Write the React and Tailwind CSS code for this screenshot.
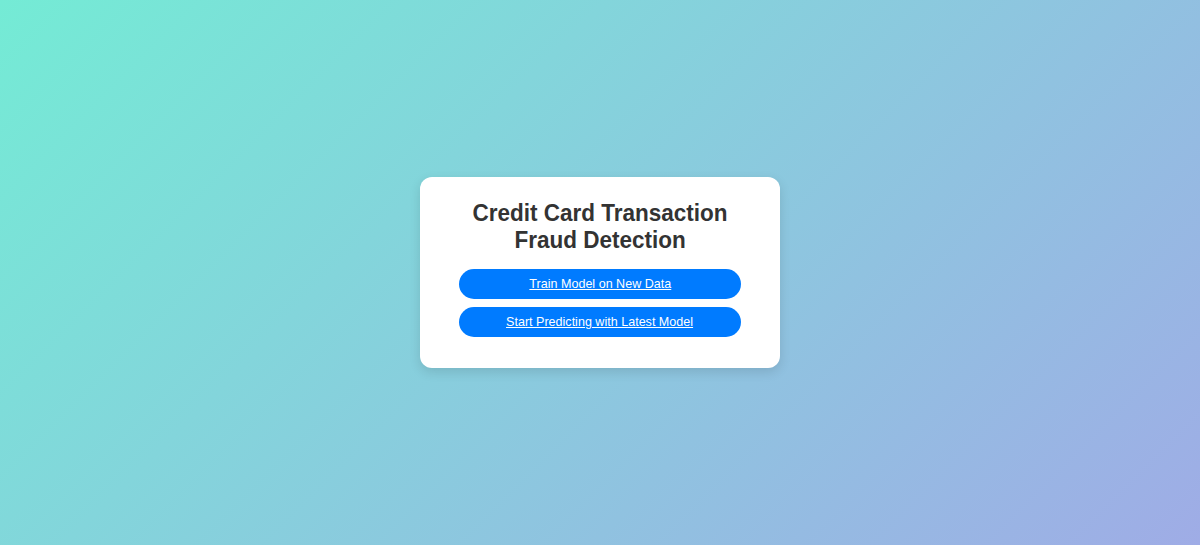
export default function App() {
  return (
    <div className="min-h-screen w-full flex items-center justify-center bg-[linear-gradient(135deg,#74ebd5,#9face6)] font-['Liberation_Sans',Arial,sans-serif]">
      <div className="w-[360px] bg-white rounded-[12px] shadow-[0_4px_12px_rgba(0,0,0,0.12)] pt-[22px] pb-[31px] flex flex-col items-center">
        <h1 className="text-[24px] leading-[27px] font-bold text-[#333] text-center whitespace-nowrap scale-x-[0.9375]">
          Credit Card Transaction
          <br />
          Fraud Detection
        </h1>
        <div className="mt-[16px] flex flex-col gap-2">
          <a href="#" className="w-[282px] h-[30px] rounded-full bg-[#007bff] text-white text-[13.5px] underline flex items-center justify-center">
            <span className="inline-block whitespace-nowrap scale-x-[0.93]">Train Model on New Data</span>
          </a>
          <a href="#" className="w-[282px] h-[30px] rounded-full bg-[#007bff] text-white text-[13.5px] underline flex items-center justify-center">
            <span className="inline-block whitespace-nowrap scale-x-[0.93]">Start Predicting with Latest Model</span>
          </a>
        </div>
      </div>
    </div>
  );
}
